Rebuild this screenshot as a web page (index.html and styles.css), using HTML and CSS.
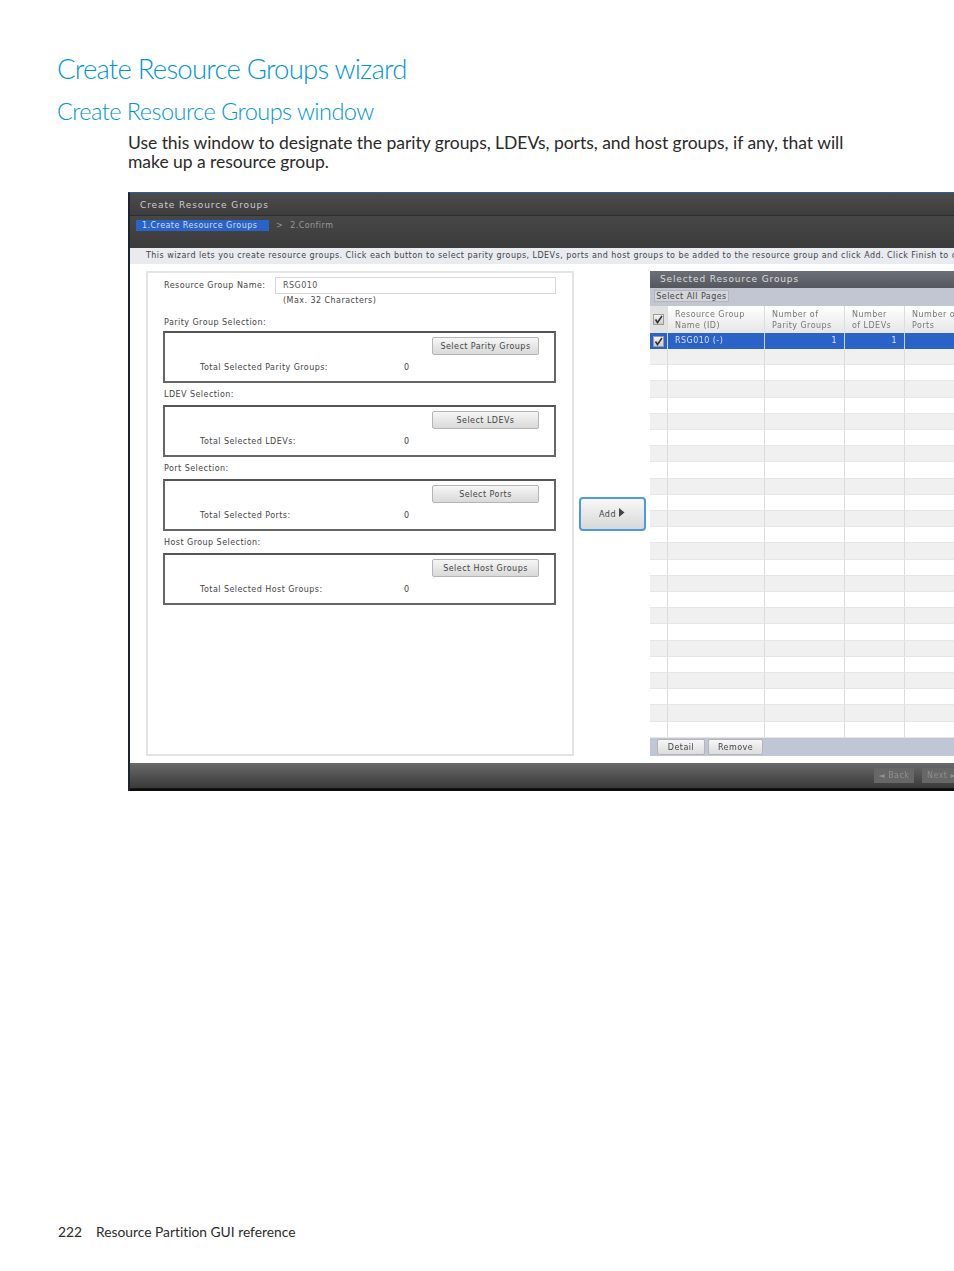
FILE: index.html
```html
<!DOCTYPE html>
<html lang="en">
<head>
  <meta charset="UTF-8">
  <meta name="viewport" content="width=device-width, initial-scale=1.0">
  <title>Create Resource Groups wizard</title>
  <link rel="stylesheet" href="styles.css">
</head>
<body>
  <div class="page">
    <h1>Create Resource Groups wizard</h1>
    <h2>Create Resource Groups window</h2>
    <p class="intro">Use this window to designate the parity groups, LDEVs, ports, and host groups, if any, that will make up a resource group.</p>

    <!-- Screenshot of the wizard window -->
    <div class="window">
      <div class="title-bar">Create Resource Groups</div>
      <div class="step-bar">
        <span class="step-active">1.Create Resource Groups</span>
        <span class="step-sep">&gt;</span>
        <span class="step-next">2.Confirm</span>
      </div>
      <div class="help-bar">This wizard lets you create resource groups. Click each button to select parity groups, LDEVs, ports and host groups to be added to the resource group and click Add. Click Finish to confirm.</div>

      <div class="window-body">
        <div class="form-panel">
          <div class="name-row">
            <span class="name-label">Resource Group Name:</span>
            <div class="name-input">RSG010</div>
          </div>
          <div class="name-hint">(Max. 32 Characters)</div>

          <div class="section-label">Parity Group Selection:</div>
          <div class="select-box">
            <button class="btn select-btn">Select Parity Groups</button>
            <div class="total-row"><span class="total-label">Total Selected Parity Groups:</span><span>0</span></div>
          </div>

          <div class="section-label">LDEV Selection:</div>
          <div class="select-box">
            <button class="btn select-btn">Select LDEVs</button>
            <div class="total-row"><span class="total-label">Total Selected LDEVs:</span><span>0</span></div>
          </div>

          <div class="section-label">Port Selection:</div>
          <div class="select-box">
            <button class="btn select-btn">Select Ports</button>
            <div class="total-row"><span class="total-label">Total Selected Ports:</span><span>0</span></div>
          </div>

          <div class="section-label">Host Group Selection:</div>
          <div class="select-box">
            <button class="btn select-btn">Select Host Groups</button>
            <div class="total-row"><span class="total-label">Total Selected Host Groups:</span><span>0</span></div>
          </div>
        </div>

        <div class="add-col">
          <button class="add-btn">Add <svg width="6" height="9" viewBox="0 0 6 9"><path d="M0 0 L5.5 4.5 L0 9 Z" fill="#444"/></svg></button>
        </div>

        <div class="result-panel">
          <div class="result-title">Selected Resource Groups</div>
          <div class="result-tools"><button class="btn tool-btn">Select All Pages</button></div>
          <div class="table-head">
            <div class="cell-check"><span class="check"><svg width="9" height="9" viewBox="0 0 9 9"><path d="M1.5 4.5 L3.5 7.5 L8 1" fill="none" stroke="#333" stroke-width="1.6"/></svg></span></div>
            <div class="head-cell w-name">Resource Group<br>Name (ID)</div>
            <div class="head-cell w-parity">Number of<br>Parity Groups</div>
            <div class="head-cell w-ldev">Number<br>of LDEVs</div>
            <div class="head-cell w-ports">Number of<br>Ports</div>
          </div>
          <div class="table-selected">
            <div class="cell-check"><span class="check"><svg width="9" height="9" viewBox="0 0 9 9"><path d="M1.5 4.5 L3.5 7.5 L8 1" fill="none" stroke="#333" stroke-width="1.6"/></svg></span></div>
            <div class="sel-cell w-name">RSG010 (-)</div>
            <div class="sel-cell w-parity num">1</div>
            <div class="sel-cell w-ldev num">1</div>
            <div class="sel-cell w-ports"></div>
          </div>
          <div class="rows">
            <div class="row"></div><div class="row"></div><div class="row"></div><div class="row"></div>
            <div class="row"></div><div class="row"></div><div class="row"></div><div class="row"></div>
            <div class="row"></div><div class="row"></div><div class="row"></div><div class="row"></div>
            <div class="row"></div><div class="row"></div><div class="row"></div><div class="row"></div>
            <div class="row"></div><div class="row"></div><div class="row"></div><div class="row"></div>
            <div class="row"></div><div class="row"></div><div class="row"></div><div class="row"></div>
          </div>
          <div class="result-foot">
            <button class="btn foot-btn detail-btn">Detail</button>
            <button class="btn foot-btn remove-btn">Remove</button>
          </div>
        </div>
      </div>

      <div class="window-foot">
        <button class="nav-btn back-btn">&#9668; Back</button>
        <button class="nav-btn next-btn">Next &#9658;</button>
      </div>
    </div>

    <div class="footer"><span class="page-num">222</span>Resource Partition GUI reference</div>
  </div>
</body>
</html>
```

FILE: styles.css
```css
html, body {
  margin: 0;
  padding: 0;
  background: white;
  overflow: hidden;
}

.page {
  height: 1271px;
  box-sizing: border-box;
  padding: 52px 0 0 57px;
  display: flex;
  flex-direction: column;
  font-family: Lato, "Open Sans", sans-serif;
  font-variant-ligatures: none;
  overflow: hidden;
}

h1 {
  margin: 0;
  height: 36px;
  font-size: 27.5px;
  line-height: 34px;
  font-weight: 300;
  color: #0096d6;
  letter-spacing: -0.76px;
}

h2 {
  margin: 8px 0 0;
  height: 30px;
  font-size: 23.5px;
  line-height: 30px;
  font-weight: 300;
  color: #0096d6;
  letter-spacing: -0.53px;
}

.intro {
  margin: 7px 0 0 71px;
  width: 730px;
  font-size: 17.5px;
  line-height: 19px;
  font-weight: 400;
  color: #2a2a2a;
  letter-spacing: -0.03px;
}

/* window picture, blurred like the scaled bitmap */
.window {
  margin: 21px 0 0 71px;
  width: 900px;
  height: 599px;
  flex: none;
  display: flex;
  flex-direction: column;
  box-sizing: border-box;
  border-left: 2px solid #1d2430;
  border-top: 1px solid #2a5f9c;
  background: white;
  font-family: "DejaVu Sans", sans-serif;
  font-size: 8px;
  letter-spacing: 0.45px;
  color: #444;
  filter: blur(0.6px);
}

.title-bar {
  height: 23px;
  padding: 4px 0 0 10px;
  box-sizing: border-box;
  line-height: 17px;
  font-size: 9px;
  letter-spacing: 0.9px;
  color: #ccc;
  background: linear-gradient(#4c4c4c, #3d3d3d);
  border-bottom: 1px solid #2e2e2e;
}

.step-bar {
  height: 32px;
  box-sizing: border-box;
  padding: 4px 0 0 6px;
  display: flex;
  align-items: flex-start;
  background: linear-gradient(#474747, #3b3b3b);
  color: #999;
  line-height: 11px;
}

.step-active {
  width: 133px;
  height: 11px;
  box-sizing: border-box;
  padding-left: 6px;
  background: #2a62c8;
  color: #cfdcf5;
}

.step-sep {
  margin-left: 7px;
}

.step-next {
  margin-left: 7px;
}

.help-bar {
  height: 16px;
  line-height: 15px;
  padding-left: 16px;
  white-space: nowrap;
  background: #e9ebf0;
  color: #444;
}

.window-body {
  height: 499px;
  display: flex;
  padding: 7px 0 7px 16px;
  box-sizing: border-box;
}

.form-panel {
  width: 428px;
  box-sizing: border-box;
  border: 2px solid #e4e4e4;
  padding: 4px 16px 0 15px;
  flex: none;
}

.name-row {
  display: flex;
  align-items: center;
  height: 17px;
  padding-left: 1px;
}

.name-label {
  width: 111px;
}

.name-input {
  flex: 1;
  height: 17px;
  box-sizing: border-box;
  border: 1px solid #d8d8d8;
  padding-left: 7px;
  line-height: 15px;
  color: #555;
}

.name-hint {
  margin: 1px 0 0 120px;
  line-height: 12px;
}

.section-label {
  height: 22px;
  padding: 6px 0 0 1px;
  box-sizing: border-box;
  line-height: 11px;
}

.name-hint + .section-label {
  height: 24px;
  padding-top: 10px;
}

.select-box {
  height: 52px;
  box-sizing: border-box;
  border: 2px solid #666;
  border-top-color: #555;
  padding: 4px 15px 0 35px;
  display: flex;
  flex-direction: column;
}

.btn {
  font-family: inherit;
  font-size: inherit;
  letter-spacing: inherit;
  color: #444;
  padding: 0;
  border: 1px solid #b5b5b5;
  border-radius: 2px;
  background: linear-gradient(#f6f6f6, #d9d9d9);
}

.select-btn {
  width: 107px;
  height: 18px;
  align-self: flex-end;
}

.total-row {
  margin-top: 7px;
  display: flex;
  line-height: 11px;
}

.total-label {
  width: 204px;
}

.add-col {
  width: 76px;
  flex: none;
  display: flex;
  align-items: center;
  justify-content: center;
}

.add-btn {
  width: 67px;
  height: 34px;
  font-family: inherit;
  font-size: inherit;
  letter-spacing: inherit;
  color: #444;
  border: 2px solid #4a9be0;
  border-radius: 4px;
  background: linear-gradient(#f8f8f8, #d8d8d8);
}

.result-panel {
  width: 400px;
  flex: none;
  display: flex;
  flex-direction: column;
}

.result-title {
  height: 17px;
  flex: none;
  box-sizing: border-box;
  padding-left: 10px;
  line-height: 17px;
  font-size: 9px;
  letter-spacing: 0.87px;
  color: #ddd;
  background: linear-gradient(#6d7078, #54575e);
}

.result-tools {
  height: 18px;
  flex: none;
  padding: 2px 0 0 4px;
  box-sizing: border-box;
  background: #c1c6d2;
}

.tool-btn {
  width: 75px;
  height: 12px;
  line-height: 9px;
  display: block;
  background: #d2d5dc;
  border-radius: 0;
}

.table-head,
.table-selected {
  display: flex;
  flex: none;
}

.table-head {
  height: 27px;
  background: linear-gradient(white, #e6e6e6);
  color: #777;
  line-height: 11px;
}

.table-selected {
  height: 16px;
  background: #2a62c8;
  color: #d5e0f6;
  line-height: 15px;
}

.cell-check {
  width: 18px;
  flex: none;
  display: flex;
  align-items: center;
  justify-content: center;
  box-sizing: border-box;
  background: #e2e2e2;
  border-right: 1px solid #ddd;
}

.table-selected .cell-check {
  background: #2a62c8;
  border-right-color: #cdd;
}

.check {
  width: 11px;
  height: 11px;
  box-sizing: border-box;
  border: 1px solid #999;
  background: linear-gradient(#f4f4f4, #ccc);
  display: flex;
  align-items: center;
  justify-content: center;
}

.head-cell {
  box-sizing: border-box;
  padding: 3px 0 0 7px;
  border-right: 1px solid #ddd;
}

.sel-cell {
  box-sizing: border-box;
  padding: 0 7px;
  border-right: 1px solid #c8d4ee;
}

.num {
  text-align: right;
}

.w-name {
  width: 97px;
}

.w-parity {
  width: 80px;
}

.w-ldev {
  width: 60px;
}

.w-ports {
  flex: 1;
}

.rows {
  flex: 1;
  display: flex;
  flex-direction: column;
}

.row {
  flex: 1;
  --tint: #f0f0f0;
  box-sizing: border-box;
  border-bottom: 1px solid #e6e6e6;
  background:
    linear-gradient(#dcdcdc, #dcdcdc) 17px 0 / 1px 100% no-repeat,
    linear-gradient(#dcdcdc, #dcdcdc) 114px 0 / 1px 100% no-repeat,
    linear-gradient(#dcdcdc, #dcdcdc) 194px 0 / 1px 100% no-repeat,
    linear-gradient(#dcdcdc, #dcdcdc) 254px 0 / 1px 100% no-repeat,
    var(--tint);
}

.row:nth-child(even) {
  --tint: white;
}

.result-foot {
  height: 18px;
  flex: none;
  box-sizing: border-box;
  padding: 1px 0 0 7px;
  display: flex;
  gap: 3px;
  background: #c1c6d6;
}

.foot-btn {
  height: 16px;
  background: linear-gradient(#f6f6f6, #dcdcdc);
}

.detail-btn {
  width: 48px;
}

.remove-btn {
  width: 55px;
}

.window-foot {
  flex: 1;
  display: flex;
  justify-content: flex-start;
  padding: 5px 0 0 744px;
  gap: 8px;
  box-sizing: border-box;
  background: linear-gradient(#6a6a6a, #3a3a3a 88%, #0c0c0c 92%);
}

.nav-btn {
  width: 40px;
  height: 15px;
  padding: 0;
  border: none;
  font-family: inherit;
  font-size: inherit;
  letter-spacing: inherit;
  color: #8f8f8f;
  background: #676767;
}

.footer {
  margin-top: auto;
  margin-bottom: 29px;
  padding-left: 1px;
  font-size: 13.8px;
  line-height: 20px;
  color: #2a2a2a;
}

.page-num {
  margin-right: 14px;
}
```
